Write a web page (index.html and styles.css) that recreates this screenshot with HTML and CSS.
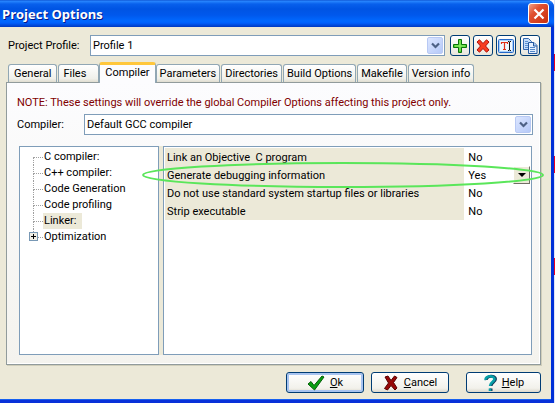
FILE: index.html
```html
<!DOCTYPE html>
<html lang="en">
<head>
<meta charset="utf-8">
<title>Project Options</title>
<link rel="stylesheet" href="styles.css">
</head>
<body>
<main class="window">
  <header class="titlebar">
    <h1>Project Options</h1>
    <button class="close" aria-label="Close"><svg width="12" height="12" viewBox="0 0 12 12"><path d="M1.500 1.500L10.500 10.500M10.500 1.500L1.500 10.500" stroke="#fff" stroke-width="2.200"/></svg></button>
  </header>
  <div class="content">
    <div class="profile">
      <label for="profile">Project Profile:</label>
      <div class="combo">
        <select id="profile"><option>Profile 1</option></select>
        <span class="arrow"><svg width="9" height="7" viewBox="0 0 9 7"><path d="M1 1.500L4.500 5L8 1.500" fill="none" stroke="#4d6185" stroke-width="2.200"/></svg></span>
      </div>
      <div class="tools">
        <button class="tool" aria-label="Add profile"><svg width="16" height="16" viewBox="0 0 16 16"><path d="M6.500 1.500h3v5h5v3h-5v5h-3v-5h-5v-3h5z" fill="#4ed030" stroke="#087408"/><path d="M8 2.500V13M3 8H13" stroke="#98f070"/></svg></button>
        <button class="tool" aria-label="Remove profile"><svg width="16" height="16" viewBox="0 0 16 16"><path d="M2 4L4.500 1.800L8 5.500L11.500 1.800L14 4L10.500 8L14 12L11.500 14.200L8 10.500L4.500 14.200L2 12L5.500 8z" fill="#f83c20" stroke="#b01008"/></svg></button>
        <button class="tool" aria-label="Rename profile"><svg width="16" height="16" viewBox="0 0 16 16"><rect x=".5" y="1.500" width="15" height="13" rx="1" fill="#eef7ff" stroke="#2468c8"/><rect x="1.500" y="2.500" width="13" height="11" fill="none" stroke="#a8d0fa"/><path d="M3.500 6V4.500H9.500V6M6.500 4.500V11.500M5 11.500h3" fill="none" stroke="#e03018" stroke-width="1.200"/><path d="M10 3.500h1l.5.500l.5-.500h1M11.500 4v8M10 12.500h1l.5-.500l.5.500h1" fill="none" stroke="#111"/></svg></button>
        <button class="tool" aria-label="Copy profile"><svg width="16" height="16" viewBox="0 0 16 16"><path d="M1.500 .5h5l3 3v8h-8z" fill="#c3dcfa" stroke="#3468b0"/><path d="M3 3.500h3M3 5.500h3M3 7.500h3M3 9.500h3" stroke="#5c90d0"/><path d="M6.500 4.500h5.500l3 3v8h-8.500z" fill="#e4f0ff" stroke="#2458a0"/><path d="M11.500 4.500V8H15" fill="#aaccf4" stroke="#2458a0"/><path d="M8 9.500h5M8 11.500h5M8 13.500h5" stroke="#5488c8"/></svg></button>
      </div>
    </div>
    <nav class="tabs" role="tablist">
      <button role="tab" class="tab general">General</button>
      <button role="tab" class="tab files">Files</button>
      <button role="tab" class="tab active" aria-selected="true">Compiler</button>
      <button role="tab" class="tab">Parameters</button>
      <button role="tab" class="tab">Directories</button>
      <button role="tab" class="tab">Build Options</button>
      <button role="tab" class="tab">Makefile</button>
      <button role="tab" class="tab">Version info</button>
    </nav>
    <section class="panel">
      <p class="note">NOTE: These settings will override the global Compiler Options affecting this project only.</p>
      <div class="compiler">
        <label for="compiler">Compiler:</label>
        <div class="combo">
          <select id="compiler"><option>Default GCC compiler</option></select>
          <span class="arrow"><svg width="9" height="7" viewBox="0 0 9 7"><path d="M1 1.500L4.500 5L8 1.500" fill="none" stroke="#4d6185" stroke-width="2.200"/></svg></span>
        </div>
      </div>
      <div class="panes">
        <ul class="tree" role="tree">
          <li role="treeitem"><span>C compiler:</span></li>
          <li role="treeitem"><span>C++ compiler:</span></li>
          <li role="treeitem"><span>Code Generation</span></li>
          <li role="treeitem"><span>Code profiling</span></li>
          <li role="treeitem" aria-selected="true"><span class="selected">Linker:</span></li>
          <li role="treeitem" class="last"><button class="expand" aria-label="Expand Optimization"><svg width="7" height="7" viewBox="0 0 7 7"><path d="M1 3.500h5M3.500 1v5" stroke="#000"/></svg></button><span>Optimization</span></li>
        </ul>
        <div class="options">
          <table>
            <tr><th scope="row">Link an Objective&nbsp; C program</th><td>No</td></tr>
            <tr><th scope="row"><label for="debug">Generate debugging information</label></th><td><div class="value"><select id="debug"><option>Yes</option></select><span class="drop"><svg width="8" height="4" viewBox="0 0 8 4"><path d="M0 0h8L4 4z"/></svg></span></div></td></tr>
            <tr><th scope="row">Do not use standard system startup files or libraries</th><td>No</td></tr>
            <tr><th scope="row">Strip executable</th><td>No</td></tr>
          </table>
        </div>
        <svg class="mark" viewBox="0 0 402 26" preserveAspectRatio="none"><ellipse cx="201" cy="13" rx="200" ry="12"/></svg>
      </div>
    </section>
    <footer class="actions">
      <button class="action default"><svg width="18" height="16" viewBox="0 0 18 16"><path d="M1 9L4 6.500L7 10.500L15 1L17 2L7.500 15z" fill="#08a010" stroke="#045c08"/></svg><span><u>O</u>k</span></button>
      <button class="action"><svg width="16" height="16" viewBox="0 0 16 16"><path d="M2 2L5 1L8 5.500L11.500 1L14 2.500L10.500 7.500L14 13L12 15L8 10.500L4.500 15L1.500 13.500L5.500 8z" fill="#980808" stroke="#580000"/></svg><span><u>C</u>ancel</span></button>
      <button class="action help"><svg width="14" height="18" viewBox="0 0 14 18"><path d="M2.500 6C2 1.500 11.500 1 11.500 5C11.500 8 7 8 7 12M7 14.500V17" transform="translate(1 0)" fill="none" stroke="#103858" stroke-width="3"/><path d="M2.500 6C2 1.500 11.500 1 11.500 5C11.500 8 7 8 7 12M7 14.500V17" fill="none" stroke="#08a0a8" stroke-width="2.600"/></svg><span><u>H</u>elp</span></button>
    </footer>
  </div>
</main>
<aside class="behind"><i></i><i></i><i></i></aside>
</body>
</html>
```

FILE: styles.css
```css
* { box-sizing: border-box; }
body {
  margin: 0;
  min-height: 100vh;
  display: grid;
  grid-template-columns: 1fr 1px;
  background: #fff;
  font: 11px/16px Roboto, "Liberation Sans", sans-serif;
  color: #000;
}
button, select { font: inherit; color: inherit; padding: 0; margin: 0; }
svg { display: block; flex: none; }
.window {
  display: flex;
  flex-direction: column;
  background: #ece9d8;
  border: solid #0831d9;
  border-width: 0 3px 3px 0;
  border-right-color: #0030d8;
  border-top-right-radius: 7px;
  box-shadow: inset 0 -1px #1660f0;
}
.titlebar {
  height: 27px;
  margin-right: -3px;
  padding: 0 5px 0 2px;
  display: flex;
  align-items: center;
  justify-content: space-between;
  border-top-right-radius: 7px;
  background: linear-gradient(#0848c8 0, #2a88ff 1px, #0860ec 4px, #0054e3 9px, #0058ec 15px, #0068ff 21px, #0060fc 23px, #0038c0 27px);
}
h1 {
  margin: 0;
  font: bold 13px/20px "Open Sans", "Noto Sans", sans-serif;
  color: #fff;
  text-shadow: 1px 1px #0a1883;
}
.close {
  width: 21px;
  height: 21px;
  display: grid;
  place-items: center;
  border: 1px solid #fff;
  border-radius: 3px;
  background: linear-gradient(135deg, #f0a088, #e05030 35%, #c83010);
}
.content {
  flex: 1;
  display: flex;
  flex-direction: column;
  padding: 8px 10px 7px 6px;
}
.profile { display: flex; align-items: center; padding: 0 1px 0 2px; }
.profile label { width: 82px; flex: none; }
.combo {
  position: relative;
  flex: 1;
  height: 21px;
  border: 1px solid #7f9db9;
  background: #fff;
}
.combo select {
  display: block;
  width: 100%;
  height: 19px;
  padding-left: 2px;
  border: 0;
  appearance: none;
  background: none;
}
.arrow {
  position: absolute;
  top: 1px;
  right: 1px;
  width: 16px;
  height: 17px;
  display: grid;
  place-items: center;
  border: 1px solid #b8c9f4;
  border-radius: 2px;
  background: linear-gradient(135deg, #dce6ff, #b5c9f8);
  pointer-events: none;
}
.tools { display: flex; gap: 3px; margin-left: 5px; }
.tool {
  width: 20px;
  height: 21px;
  display: grid;
  place-items: center;
  border: 1px solid #003c74;
  border-radius: 3px;
  background: linear-gradient(#fff, #e8e6dc);
}
.tool:last-child { margin-left: 1px; }
.tabs {
  display: flex;
  align-items: flex-end;
  gap: 1px;
  height: 26px;
  padding-left: 2px;
}
.tab {
  height: 18px;
  padding: 0 3px;
  border: 1px solid #91a7b4;
  border-bottom: 0;
  border-radius: 3px 3px 0 0;
  background: linear-gradient(#fff, #f0f0ea 80%, #e0ddd0);
  white-space: nowrap;
}
.general { padding: 0 5px; }
.files { padding: 0 12px 0 4px; margin-right: -1px; }
.active {
  position: relative;
  height: 21px;
  margin: 0 -1px -1px 0;
  padding: 0 5px 2px;
  border-top: 3px solid #ffc73c;
  background: #fcfcfe;
}
.panel {
  flex: 1;
  display: flex;
  flex-direction: column;
  padding: 12px 7px 9px 10px;
  border: 1px solid #919b9c;
  box-shadow: inset -1px -1px #fff, 1px 1px #d0ceba;
  background: linear-gradient(#fcfcfe, #f4f3ee);
}
.note { margin: 0; color: #800000; white-space: nowrap; }
.compiler { display: flex; align-items: center; margin-top: 3px; }
.compiler label { width: 67px; flex: none; }
.panes {
  position: relative;
  flex: 1;
  display: grid;
  grid-template-columns: 140px 1fr;
  gap: 4px;
  margin: 11px 1px 0 2px;
  background: #ece9d8;
}
.tree, .options { border: 1px solid #7f9db9; background: #fff; }
.tree { margin: 0; padding: 2px 0; list-style: none; }
.tree li {
  position: relative;
  height: 16px;
  display: flex;
  padding-left: 23px;
}
.tree li::before {
  content: "";
  position: absolute;
  left: 13px;
  top: 0;
  width: 9px;
  height: 8px;
  border: dotted #a0a0a0;
  border-width: 0 0 1px 1px;
}
.tree li:first-child::before { border-left-color: transparent; }
.tree li:not(.last)::after {
  content: "";
  position: absolute;
  left: 13px;
  top: 8px;
  height: 8px;
  border-left: 1px dotted #a0a0a0;
}
.tree span { padding: 0 1px; }
.tree .selected { padding-right: 6px; background: #ece9d8; }
.expand {
  position: absolute;
  z-index: 1;
  left: 9px;
  top: 3px;
  width: 9px;
  height: 9px;
  display: grid;
  place-items: center;
  border: 1px solid #7898b5;
  background: #f0eee4;
}
.options { padding: 1px; }
table { width: 100%; border-collapse: collapse; }
tr { height: 18px; }
th, td { padding: 1px 2px 0; height: 18px; }
th { width: 82%; font-weight: normal; text-align: left; background: #ece9d8; white-space: nowrap; }
td { padding-left: 4px; }
.value { position: relative; }
.value select { display: block; width: 100%; height: 17px; border: 0; appearance: none; background: #fff; }
.drop {
  position: absolute;
  top: -1px;
  right: -2px;
  width: 17px;
  height: 18px;
  display: grid;
  place-items: center;
  border: 1px solid;
  border-color: #fff #716f64 #716f64 #fff;
  background: #ece9d8;
  pointer-events: none;
}
.mark {
  position: absolute;
  left: 123px;
  top: 16px;
  width: calc(100% - 111px);
  height: 26px;
  pointer-events: none;
}
.mark ellipse { fill: none; stroke: #5ae65a; stroke-width: 2; vector-effect: non-scaling-stroke; }
.actions { display: flex; justify-content: flex-end; gap: 7px; margin-top: 7px; }
.action {
  width: 78px;
  height: 21px;
  display: flex;
  align-items: center;
  justify-content: center;
  gap: 5px;
  border: 1px solid #003c74;
  border-radius: 3px;
  background: linear-gradient(#fff, #f2f1eb 80%, #dcd8cc);
}
.default { box-shadow: inset 0 0 0 2px #a8c4f0; }
.help { width: 75px; margin-left: 10px; }
.behind {
  display: flex;
  flex-direction: column;
  gap: 85px;
  padding-top: 54px;
  background: #dfe3f6;
}
.behind i { height: 17px; background: #e80020; }
```
